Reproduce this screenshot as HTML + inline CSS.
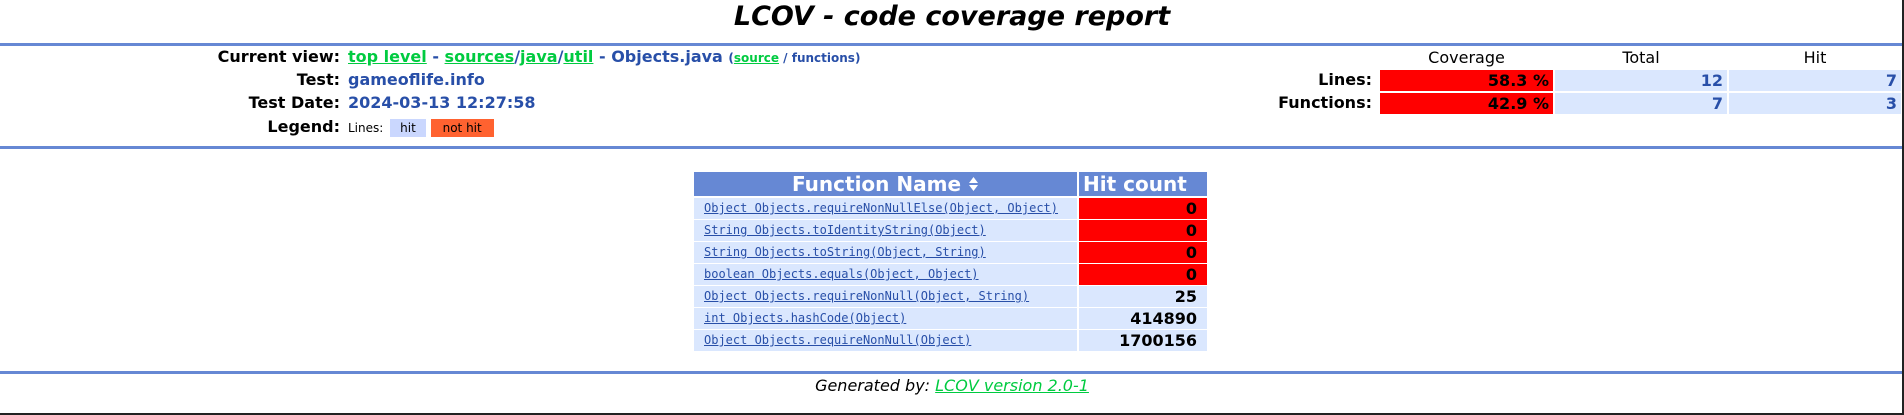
<!DOCTYPE html>
<html><head><meta charset="utf-8"><style>
body{margin:0;width:1904px;height:415px;position:relative;background:#fff;font-family:"DejaVu Sans","Liberation Sans",sans-serif;overflow:hidden}
.a{position:absolute;white-space:nowrap}
.hl{position:absolute;left:0;width:1904px;height:3px;background:#6688d4}
.lbl{font-weight:bold;font-size:16px;color:#000;text-align:right;width:200px;left:140px}
.val{font-weight:bold;font-size:16px;color:#284fa8;left:348px}
a{color:#00cb40;text-decoration:underline}
.cell{position:absolute;height:21px;font-weight:bold;font-size:16px;line-height:21px;text-align:right;box-sizing:border-box;padding-right:4px}
.fn{position:absolute;left:694px;width:383px;height:21px;background:#dae7fe;font-family:"DejaVu Sans Mono","Liberation Mono",monospace;font-size:12px;line-height:21px;padding-left:10px;box-sizing:border-box}
.fn span{color:#284fa8;text-decoration:underline}
.hc{position:absolute;left:1079px;width:128px;height:21px;background:#dae7fe;font-weight:bold;font-size:16px;line-height:21px;text-align:right;padding-right:10px;box-sizing:border-box}
.red{background:#ff0000}
</style></head><body>
<div class="a" style="left:0;width:1904px;text-align:center;top:1px;font-size:27px;font-weight:bold;font-style:italic;line-height:32px">LCOV - code coverage report</div>
<div class="hl" style="top:43px"></div>

<div class="a lbl" style="top:47px">Current view:</div>
<div class="a val" style="top:47px"><a>top level</a> - <a>sources</a>/<a>java</a>/<a>util</a> - Objects.java <span style="font-size:12px">(<a>source</a> / functions)</span></div>
<div class="a lbl" style="top:70px">Test:</div>
<div class="a val" style="top:70px">gameoflife.info</div>
<div class="a lbl" style="top:93px">Test Date:</div>
<div class="a val" style="top:93px">2024-03-13 12:27:58</div>
<div class="a lbl" style="top:117px">Legend:</div>
<div class="a" style="left:348px;top:119px;font-size:12px;line-height:18px">Lines: <span style="display:inline-block;background:#cad7fe;padding:0 10px;margin-left:3px">hit</span> <span style="display:inline-block;background:#ff6230;padding:0 12px;margin-left:1px">not hit</span></div>

<div class="a" style="left:1380px;width:173px;text-align:center;top:48px;font-size:16px">Coverage</div>
<div class="a" style="left:1555px;width:172px;text-align:center;top:48px;font-size:16px">Total</div>
<div class="a" style="left:1729px;width:172px;text-align:center;top:48px;font-size:16px">Hit</div>
<div class="a" style="left:1172px;width:200px;text-align:right;top:70px;font-weight:bold;font-size:16px">Lines:</div>
<div class="a" style="left:1172px;width:200px;text-align:right;top:93px;font-weight:bold;font-size:16px">Functions:</div>
<div class="cell" style="left:1380px;width:173px;top:70px;background:#f00">58.3 %</div>
<div class="cell" style="left:1555px;width:172px;top:70px;background:#dae7fe;color:#284fa8">12</div>
<div class="cell" style="left:1729px;width:172px;top:70px;background:#dae7fe;color:#284fa8">7</div>
<div class="cell" style="left:1380px;width:173px;top:93px;background:#f00">42.9 %</div>
<div class="cell" style="left:1555px;width:172px;top:93px;background:#dae7fe;color:#284fa8">7</div>
<div class="cell" style="left:1729px;width:172px;top:93px;background:#dae7fe;color:#284fa8">3</div>

<div class="hl" style="top:146px"></div>

<div class="a" style="left:694px;top:172px;width:383px;height:24px;background:#6688d4;color:#fff;font-weight:bold;font-size:20px;line-height:24px;text-align:center">Function Name <svg width="11" height="16" viewBox="0 0 11 16" style="vertical-align:-1px"><path d="M1 7 L5.5 1 L10 7 Z M1 9 L5.5 15 L10 9 Z" fill="#fff"/></svg></div>
<div class="a" style="left:1079px;top:172px;width:128px;height:24px;background:#6688d4;color:#fff;font-weight:bold;font-size:20px;line-height:24px;padding-left:4px;box-sizing:border-box">Hit count</div>

<div class="fn" style="top:198px"><span>Object Objects.requireNonNullElse(Object, Object)</span></div><div class="hc red" style="top:198px">0</div>
<div class="fn" style="top:220px"><span>String Objects.toIdentityString(Object)</span></div><div class="hc red" style="top:220px">0</div>
<div class="fn" style="top:242px"><span>String Objects.toString(Object, String)</span></div><div class="hc red" style="top:242px">0</div>
<div class="fn" style="top:264px"><span>boolean Objects.equals(Object, Object)</span></div><div class="hc red" style="top:264px">0</div>
<div class="fn" style="top:286px"><span>Object Objects.requireNonNull(Object, String)</span></div><div class="hc" style="top:286px">25</div>
<div class="fn" style="top:308px"><span>int Objects.hashCode(Object)</span></div><div class="hc" style="top:308px">414890</div>
<div class="fn" style="top:330px"><span>Object Objects.requireNonNull(Object)</span></div><div class="hc" style="top:330px">1700156</div>

<div class="hl" style="top:371px"></div>
<div class="a" style="left:0;width:1904px;text-align:center;top:376px;font-size:16px;font-style:italic">Generated by: <a>LCOV version 2.0-1</a></div>
<div class="a" style="left:0;top:413px;width:1904px;height:2px;background:#222"></div>
<div class="a" style="left:1902px;top:0;width:2px;height:415px;background:#222"></div>
</body></html>
